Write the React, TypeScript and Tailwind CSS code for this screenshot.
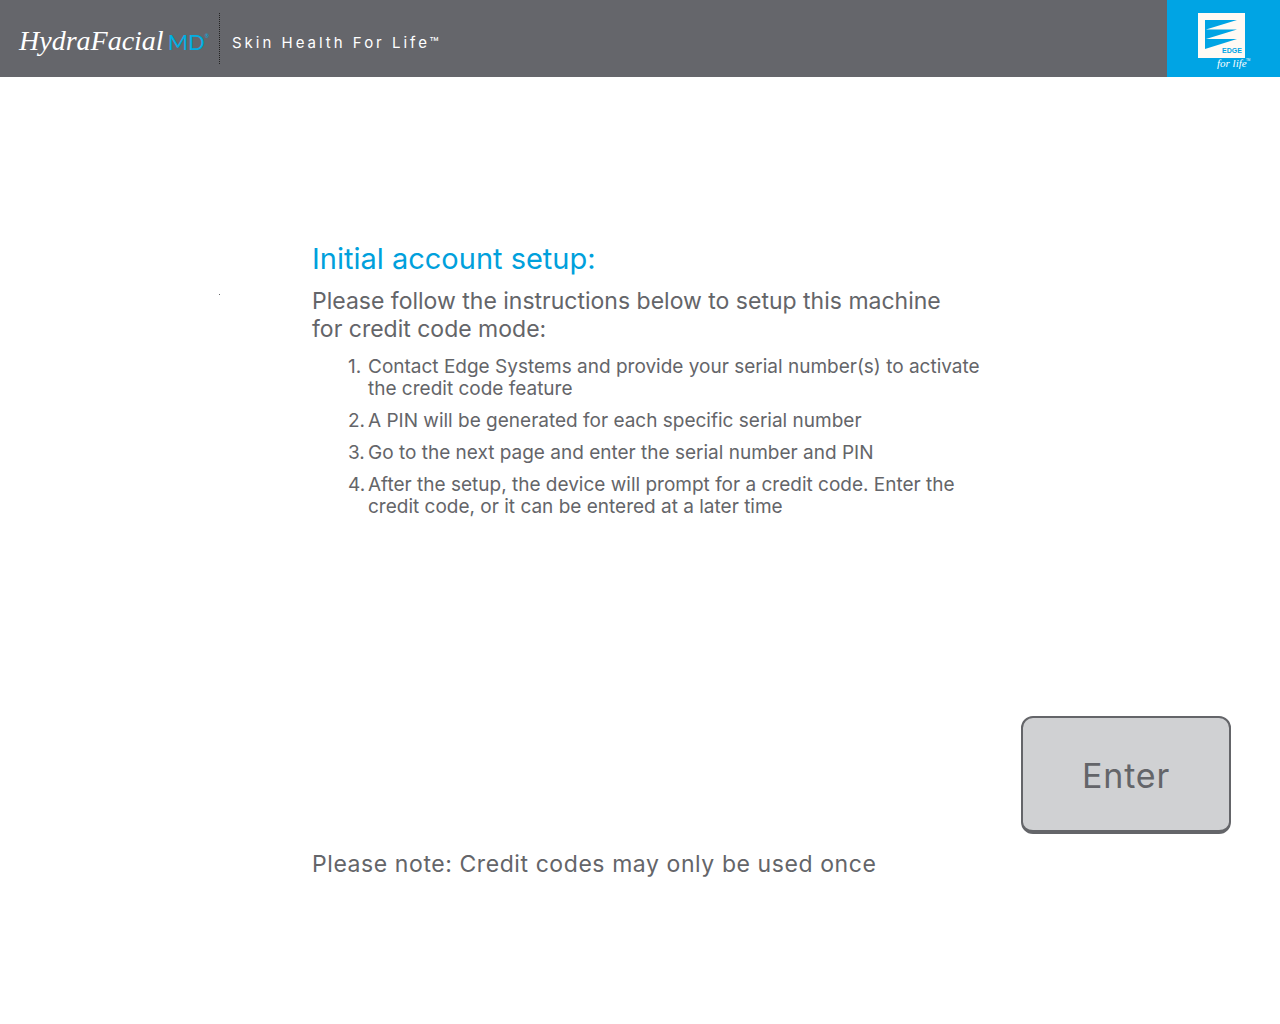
const items = [
  { first: "Contact Edge Systems and provide your serial number(s) to activate", rest: "the credit code feature" },
  { first: "A PIN will be generated for each specific serial number" },
  { first: "Go to the next page and enter the serial number and PIN" },
  { first: "After the setup, the device will prompt for a credit code. Enter the", rest: "credit code, or it can be entered at a later time" },
];

function EdgeLogo() {
  return (
    <svg viewBox="0 0 60 64" className="h-16 w-[60px]" role="img" aria-label="Edge for life">
      <rect x="4" y="3" width="47" height="45" fill="#fffaf4" />
      <path d="M11 10H43L12 19.5H43L12 29H43L11 39Z" fill="#00a4e4" />
      <text x="28" y="43" fontFamily="Liberation Sans, sans-serif" fontWeight="700" fontSize="7" fill="#00a4e4">EDGE</text>
      <text x="23" y="57" fontFamily="Liberation Serif, serif" fontStyle="italic" fontSize="11" fill="#fff">for life</text>
      <text x="52" y="51" fontFamily="Liberation Sans, sans-serif" fontSize="3" fill="#fff">TM</text>
    </svg>
  );
}

export default function App() {
  return (
    <div className="min-h-screen bg-white font-['Inter',sans-serif] text-[#646569]">
      <header className="flex h-[77px] items-center bg-[#65666b] text-white">
        <div className="flex h-[51px] items-baseline border-r border-dotted border-[#222] pr-2.5 pl-[19px]">
          <span className="font-['Liberation_Serif',serif] text-[28px] leading-[56px] italic">HydraFacial</span>
          <span className="flex items-start pl-1 font-['Lato',sans-serif] text-[22px] leading-6 text-[#00afe3]">
            MD<span className="text-[5px] leading-3">®</span>
          </span>
        </div>
        <p className="grow pt-2.5 pl-3 text-[15px] tracking-[3px]">Skin Health For Life™</p>
        <div className="flex h-full w-[113px] items-start justify-center bg-[#00a4e4] pt-2.5"><EdgeLogo /></div>
      </header>
      <main>
        <section className="flex pt-[164px]">
          <div className="w-[312px] shrink-0"><div className="mt-[53px] ml-[219px] size-px bg-[#646569]" /></div>
          <div>
            <h1 className="text-[29px] leading-9 text-[#00a0dc]">Initial account setup:</h1>
            <p className="mt-2.5 text-[23px] leading-7">Please follow the instructions below to setup this machine<br />for credit code mode:</p>
            <ol className="mt-[13px] ml-9 space-y-2.5 text-[19px] leading-[22px]">
              {items.map((item, i) => (
                <li key={item.first} className="flex"><span className="w-5 shrink-0">{i + 1}.</span><span>{item.first}{item.rest && <><br />{item.rest}</>}</span></li>
              ))}
            </ol>
          </div>
        </section>
        <div className="mt-[198px] flex justify-end pr-[49px]">
          <button type="button" className="h-[118px] w-[210px] rounded-xl border-2 border-b-4 border-[#646569] bg-[#d0d1d3] pt-0.5 text-[34px] tracking-wide">Enter</button>
        </div>
        <p className="mt-4 ml-[312px] text-[23px] leading-7 tracking-wide">Please note: Credit codes may only be used once</p>
      </main>
    </div>
  );
}
